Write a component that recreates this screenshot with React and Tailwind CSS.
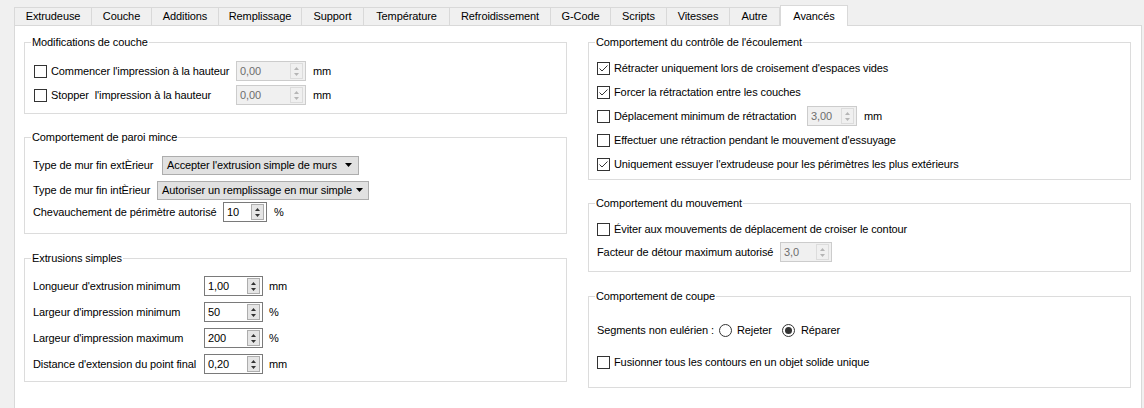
import React from 'react';

const tabs = [
  ['Extrudeuse', 78], ['Couche', 60], ['Additions', 67], ['Remplissage', 83],
  ['Support', 62], ['Température', 86], ['Refroidissement', 101], ['G-Code', 60],
  ['Scripts', 56], ['Vitesses', 63], ['Autre', 50], ['Avancés', 68],
];

function CheckBox({ checked }) {
  return (
    <span className="w-[13px] h-[13px] shrink-0 border border-[#333333] bg-white flex items-center justify-center">
      {checked && (
        <svg width="11" height="11" viewBox="0 0 11 11">
          <path d="M1.5 5.5 L4 8 L9.5 2.5" fill="none" stroke="#333333" strokeWidth="1" />
        </svg>
      )}
    </span>
  );
}

function Radio({ checked }) {
  return (
    <span className="w-[13px] h-[13px] shrink-0 rounded-full border border-[#333333] bg-white flex items-center justify-center">
      {checked && <span className="w-[7px] h-[7px] rounded-full bg-[#333333]" />}
    </span>
  );
}

function SpinBox({ value, width, disabled }) {
  const outer = disabled
    ? 'border-[#cccccc] bg-[#f0f0f0] text-[#6d6d6d]'
    : 'border-[#7a7a7a] bg-white text-black';
  const btn = disabled ? 'border-[#dcdcdc] bg-[#f0f0f0]' : 'border-[#adadad] bg-[#e5e5e5]';
  const arrow = disabled ? '#b5b5b5' : '#333333';
  return (
    <div className={`h-[20px] shrink-0 border flex items-center justify-between pl-[3px] pr-[2px] ${outer}`} style={{ width }}>
      <span className="leading-none">{value}</span>
      <div className={`w-[13px] h-[16px] border flex flex-col items-center justify-center gap-[3px] ${btn}`}>
        <svg width="5" height="3" viewBox="0 0 5 3"><path d="M0 3 L2.5 0 L5 3 Z" fill={arrow} /></svg>
        <svg width="5" height="3" viewBox="0 0 5 3"><path d="M0 0 L2.5 3 L5 0 Z" fill={arrow} /></svg>
      </div>
    </div>
  );
}

function Combo({ value, width }) {
  return (
    <div className="h-[19px] shrink-0 border border-[#adadad] bg-[#e1e1e1] flex items-center justify-between pl-[4px] pr-[6px] overflow-hidden" style={{ width }}>
      <span className="leading-none whitespace-nowrap">{value}</span>
      <svg className="shrink-0 ml-[4px]" width="7" height="4" viewBox="0 0 7 4"><path d="M0 0 L3.5 4 L7 0 Z" fill="#000" /></svg>
    </div>
  );
}

function Group({ title, className, children }) {
  return (
    <fieldset className={`border border-[#dcdcdc] ${className}`}>
      <legend className="ml-[6px] px-[1px] leading-[16px] h-[16px]">{title}</legend>
      {children}
    </fieldset>
  );
}

export default function App() {
  return (
    <div
      className="w-[1144px] h-[408px] bg-[#f0f0f0] overflow-hidden flex flex-col text-[11px] tracking-[-0.1px] text-black whitespace-nowrap"
      style={{ fontFamily: '"Liberation Sans", Arial, sans-serif' }}
    >
      {/* Tabs */}
      <div className="flex shrink-0 pl-[14px] pt-[7px] h-[25px] items-end">
        {tabs.map(([name, w], i) => {
          const active = name === 'Avancés';
          return (
            <div
              key={name}
              style={{ width: w }}
              className={
                active
                  ? 'relative z-10 h-[21px] mb-[-1px] bg-white border border-b-0 border-[#d9d9d9] flex items-center justify-center'
                  : `h-[18px] bg-[#f0f0f0] border-t border-b-0 border-r border-[#d9d9d9] flex items-center justify-center ${i === 0 ? 'border-l' : ''}`
              }
            >
              {name}
            </div>
          );
        })}
      </div>

      {/* Panel */}
      <div className="h-[400px] shrink-0 ml-[14px] mr-[2px] border border-[#d9d9d9] bg-white pt-[8px] pl-[9px] pr-[9px] flex gap-[21px]">
        {/* Left column */}
        <div className="w-[543px] flex flex-col">
          <Group title="Modifications de couche" className="h-[80px]">
            <div className="pt-[11px] pl-[9px] flex flex-col gap-[4px]">
              <div className="h-[20px] flex items-center">
                <CheckBox />
                <span className="ml-[4px] w-[185px]">Commencer l'impression à la hauteur</span>
                <SpinBox value="0,00" width={70} disabled />
                <span className="ml-[7px]">mm</span>
              </div>
              <div className="h-[20px] flex items-center">
                <CheckBox />
                <span className="ml-[4px] w-[185px] whitespace-pre">Stopper  l'impression à la hauteur</span>
                <SpinBox value="0,00" width={70} disabled />
                <span className="ml-[7px]">mm</span>
              </div>
            </div>
          </Group>

          <Group title="Comportement de paroi mince" className="mt-[15px] h-[105px]">
            <div className="pt-[10px] pl-[8px] flex flex-col">
              <div className="h-[20px] flex items-center">
                <span className="w-[129px]">Type de mur fin extÈrieur</span>
                <Combo value="Accepter l'extrusion simple de murs" width={197} />
              </div>
              <div className="h-[20px] mt-[5px] flex items-center">
                <span className="w-[124px]">Type de mur fin intÈrieur</span>
                <Combo value="Autoriser un remplissage en mur simple" width={212} />
              </div>
              <div className="h-[20px] mt-[2px] flex items-center">
                <span className="w-[190px]">Chevauchement de périmètre autorisé</span>
                <SpinBox value="10" width={44} />
                <span className="ml-[7px]">%</span>
              </div>
            </div>
          </Group>

          <Group title="Extrusions simples" className="mt-[16px] h-[132px]">
            <div className="pt-[10px] pl-[8px] flex flex-col gap-[6px]">
              {[
                ["Longueur d'extrusion minimum", '1,00', 'mm'],
                ["Largeur d'impression minimum", '50', '%'],
                ["Largeur d'impression maximum", '200', '%'],
                ["Distance d'extension du point final", '0,20', 'mm'],
              ].map(([label, v, u]) => (
                <div key={label} className="h-[20px] flex items-center">
                  <span className="w-[171px]">{label}</span>
                  <SpinBox value={v} width={59} />
                  <span className="ml-[6px]">{u}</span>
                </div>
              ))}
            </div>
          </Group>
        </div>

        {/* Right column */}
        <div className="w-[543px] flex flex-col">
          <Group title="Comportement du contrôle de l'écoulement" className="h-[146px]">
            <div className="pt-[8px] pl-[8px] flex flex-col gap-[4px]">
              <div className="h-[20px] flex items-center">
                <CheckBox checked />
                <span className="ml-[4px]">Rétracter uniquement lors de croisement d'espaces vides</span>
              </div>
              <div className="h-[20px] flex items-center">
                <CheckBox checked />
                <span className="ml-[4px]">Forcer la rétractation entre les couches</span>
              </div>
              <div className="h-[20px] flex items-center">
                <CheckBox />
                <span className="ml-[4px] w-[193px]">Déplacement minimum de rétractation</span>
                <SpinBox value="3,00" width={50} disabled />
                <span className="ml-[7px]">mm</span>
              </div>
              <div className="h-[20px] flex items-center">
                <CheckBox />
                <span className="ml-[4px]">Effectuer une rétraction pendant le mouvement d'essuyage</span>
              </div>
              <div className="h-[20px] flex items-center">
                <CheckBox checked />
                <span className="ml-[4px]">Uniquement essuyer l'extrudeuse pour les périmètres les plus extérieurs</span>
              </div>
            </div>
          </Group>

          <Group title="Comportement du mouvement" className="mt-[15px] h-[77px]">
            <div className="pt-[8px] pl-[8px] flex flex-col gap-[3px]">
              <div className="h-[20px] flex items-center">
                <CheckBox />
                <span className="ml-[4px]">Éviter aux mouvements de déplacement de croiser le contour</span>
              </div>
              <div className="h-[20px] flex items-center">
                <span className="w-[183px]">Facteur de détour maximum autorisé</span>
                <SpinBox value="3,0" width={52} disabled />
              </div>
            </div>
          </Group>

          <Group title="Comportement de coupe" className="mt-[16px] h-[100px]">
            <div className="pt-[16px] pl-[8px] flex flex-col gap-[12px]">
              <div className="h-[20px] flex items-center">
                <span className="w-[122px]">Segments non eulérien :</span>
                <Radio />
                <span className="ml-[5px] w-[45px]">Rejeter</span>
                <Radio checked />
                <span className="ml-[6px]">Réparer</span>
              </div>
              <div className="h-[20px] flex items-center">
                <CheckBox />
                <span className="ml-[4px]">Fusionner tous les contours en un objet solide unique</span>
              </div>
            </div>
          </Group>
        </div>
      </div>
    </div>
  );
}
